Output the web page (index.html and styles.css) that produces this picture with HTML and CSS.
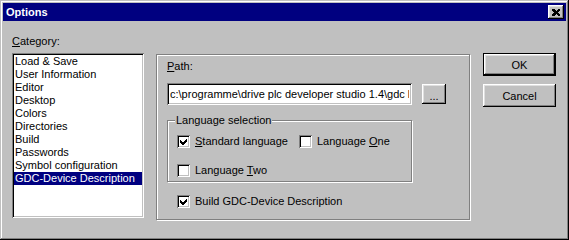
FILE: index.html
```html
<!DOCTYPE html>
<html lang="en">
<head>
  <meta charset="UTF-8">
  <title>Options</title>
  <link rel="stylesheet" href="styles.css">
</head>
<body>
  <div class="window">
    <div class="titlebar">
      <span class="title">Options</span>
      <span class="close">
        <svg width="8" height="7" viewBox="0 0 8 7" shape-rendering="crispEdges">
          <path d="M0 0h2l2 2l2 -2h2v1l-2 2.5l2 2.5v1h-2l-2 -2l-2 2h-2v-1l2 -2.5l-2 -2.5z" fill="#000"/>
        </svg>
      </span>
    </div>

    <div class="content">
      <div class="col-left">
        <div class="caption"><u>C</u>ategory:</div>
        <ul class="listbox">
          <li>Load &amp; Save</li>
          <li>User Information</li>
          <li>Editor</li>
          <li>Desktop</li>
          <li>Colors</li>
          <li>Directories</li>
          <li>Build</li>
          <li>Passwords</li>
          <li>Symbol configuration</li>
          <li class="selected">GDC-Device Description</li>
        </ul>
      </div>

      <div class="panel">
        <div class="caption"><u>P</u>ath:</div>
        <div class="path-row">
          <input class="textbox" type="text" value="c:\programme\drive plc developer studio 1.4\gdc lib" readonly>
          <button class="btn small">...</button>
        </div>

        <div class="group">
          <span class="legend">Language selection</span>
          <div class="check-grid">
            <label class="checkbox">
              <span class="box checked">
                <svg width="9" height="9" viewBox="0 0 9 9" shape-rendering="crispEdges"><polygon points="1,3 3,5 4,5 8,1 8,4 4,8 3,8 1,6" fill="#000"/></svg>
              </span>
              <span><u>S</u>tandard language</span>
            </label>
            <label class="checkbox">
              <span class="box"></span>
              <span>Language <u>O</u>ne</span>
            </label>
            <label class="checkbox">
              <span class="box"></span>
              <span>Language <u>T</u>wo</span>
            </label>
          </div>
        </div>

        <label class="checkbox build">
          <span class="box checked">
            <svg width="9" height="9" viewBox="0 0 9 9" shape-rendering="crispEdges"><polygon points="1,3 3,5 4,5 8,1 8,4 4,8 3,8 1,6" fill="#000"/></svg>
          </span>
          <span>Build GDC-Device Description</span>
        </label>
      </div>

      <div class="buttons">
        <button class="btn default">OK</button>
        <button class="btn">Cancel</button>
      </div>
    </div>
  </div>
</body>
</html>
```

FILE: styles.css
```css
body {
  margin: 0;
  font-family: "Liberation Sans", Arial, sans-serif;
  font-size: 11px;
  color: #000;
}
.window {
  width: 569px;
  height: 240px;
  box-sizing: border-box;
  padding: 3px;
  background: #c0c0c0;
  box-shadow: inset -1px -1px #000, inset 1px 1px #c0c0c0,
              inset -2px -2px #808080, inset 2px 2px #fff;
}
.titlebar {
  height: 18px;
  background: #000080;
  display: flex;
  align-items: center;
  justify-content: space-between;
  padding: 0 2px 0 3px;
}
.title {
  color: #fff;
  font-weight: bold;
}
.close {
  width: 16px;
  height: 14px;
  box-sizing: border-box;
  background: #c0c0c0;
  display: flex;
  align-items: center;
  justify-content: center;
  box-shadow: inset -1px -1px #000, inset 1px 1px #fff,
              inset -2px -2px #808080, inset 2px 2px #dfdfdf;
}
.content {
  display: flex;
  align-items: flex-start;
  padding: 14px 0 0 9px;
}
.caption {
  line-height: 13px;
  height: 13px;
}
.col-left {
  width: 132px;
}
.listbox {
  list-style: none;
  margin: 5px 0 0;
  padding: 2px;
  height: 165px;
  box-sizing: border-box;
  background: #fff;
  box-shadow: inset 1px 1px #808080, inset -1px -1px #fff,
              inset 2px 2px #000, inset -2px -2px #c0c0c0;
}
.listbox li {
  height: 13px;
  line-height: 13px;
  padding-left: 1px;
  white-space: nowrap;
}
.listbox .selected {
  background: #000080;
  color: #fff;
}
.panel {
  width: 314px;
  height: 166px;
  box-sizing: border-box;
  margin: 19px 0 0 12px;
  padding: 5px 0 0 10px;
  border: 1px solid #808080;
  box-shadow: inset 1px 1px #fff, 1px 1px #fff;
}
.path-row {
  display: flex;
  align-items: center;
  margin-top: 10px;
}
.textbox {
  width: 245px;
  height: 22px;
  box-sizing: border-box;
  margin: 0;
  padding: 0 3px;
  border: none;
  outline: none;
  font: inherit;
  color: #000;
  background: #fff;
  box-shadow: inset 1px 1px #808080, inset -1px -1px #fff,
              inset 2px 2px #000, inset -2px -2px #c0c0c0;
}
.btn {
  width: 73px;
  height: 23px;
  margin: 0;
  padding: 0;
  border: none;
  font: inherit;
  color: #000;
  background: #c0c0c0;
  box-shadow: inset -1px -1px #000, inset 1px 1px #fff,
              inset -2px -2px #808080, inset 2px 2px #dfdfdf;
}
.btn.small {
  width: 24px;
  height: 20px;
  margin-left: 10px;
  padding-top: 3px;
}
.btn.default {
  border: 1px solid #000;
}
.group {
  position: relative;
  width: 245px;
  height: 62px;
  box-sizing: border-box;
  margin-top: 15px;
  padding: 14px 0 0 9px;
  border: 1px solid #808080;
  box-shadow: inset 1px 1px #fff, 1px 1px #fff;
}
.legend {
  position: absolute;
  top: -7px;
  left: 7px;
  padding: 0 1px;
  line-height: 13px;
  background: #c0c0c0;
}
.check-grid {
  display: grid;
  grid-template-columns: 122px auto;
  row-gap: 16px;
}
.checkbox {
  display: flex;
  align-items: center;
  gap: 5px;
  height: 13px;
  line-height: 13px;
}
.box {
  width: 13px;
  height: 13px;
  box-sizing: border-box;
  padding: 2px;
  background: #fff;
  box-shadow: inset 1px 1px #808080, inset -1px -1px #fff,
              inset 2px 2px #000, inset -2px -2px #c0c0c0;
}
.box svg {
  display: block;
}
.checkbox.build {
  margin: 13px 0 0 10px;
}
.buttons {
  display: flex;
  flex-direction: column;
  gap: 8px;
  margin: 18px 0 0 13px;
}
```
